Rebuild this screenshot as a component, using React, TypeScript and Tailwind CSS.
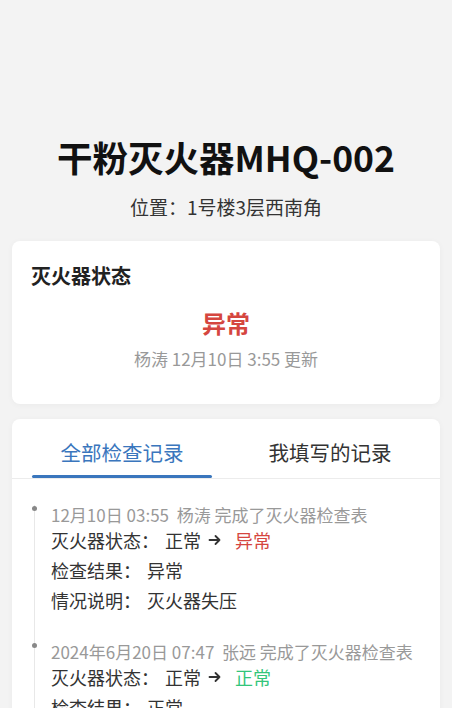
const font = { fontFamily: '"Noto Sans CJK SC", "Noto Sans", sans-serif' };

interface Row {
  label: string;
  value: string;
  from?: string;
  tone?: 'red' | 'green';
}

interface Entry {
  head: string;
  rows: Row[];
}

const entries: Entry[] = [
  {
    head: '12月10日 03:55\u00a0\u00a0杨涛 完成了灭火器检查表',
    rows: [
      { label: '灭火器状态：', from: '正常', value: '异常', tone: 'red' },
      { label: '检查结果：', value: '异常' },
      { label: '情况说明：', value: '灭火器失压' },
    ],
  },
  {
    head: '2024年6月20日 07:47\u00a0\u00a0张远 完成了灭火器检查表',
    rows: [
      { label: '灭火器状态：', from: '正常', value: '正常', tone: 'green' },
      { label: '检查结果：', value: '正常' },
    ],
  },
];

function RecordRow({ row }: { row: Row }) {
  const toneClass =
    row.tone === 'red' ? 'text-[#d5463f]' : row.tone === 'green' ? 'text-[#33c57a]' : 'text-[#333]';
  return (
    <div className="flex items-center text-[18px] leading-[30px] text-[#333]">
      <span>{row.label}</span>
      <span className="ml-[6px]">{row.from ?? ''}</span>
      {row.from && (
        <svg width="14" height="14" viewBox="0 0 14 14" className="mx-[7px]">
          <path d="M1.5 7h10M7.5 3l4 4-4 4" fill="none" stroke="#333" strokeWidth="1.8" strokeLinecap="round" strokeLinejoin="round" />
        </svg>
      )}
      <span className={`${row.from ? 'ml-[6px]' : ''} ${toneClass}`}>{row.value}</span>
    </div>
  );
}

export default function App() {
  return (
    <div className="h-[708px] overflow-hidden bg-[#f3f3f3] px-3 pt-[135px]" style={font}>
      <h1 className="text-center text-[35.5px] leading-[44px] font-bold text-[#111]">干粉灭火器MHQ-002</h1>
      <p className="mt-[14px] text-center text-[19px] leading-[28px] text-[#333]">位置：1号楼3层西南角</p>

      <div className="mt-[20px] rounded-lg bg-white pt-[21px] pb-[33px] shadow-[0_1px_6px_rgba(0,0,0,0.04)]">
        <h2 className="px-[19px] text-[20px] leading-[28px] font-bold text-[#222]">灭火器状态</h2>
        <div className="mt-[17px] text-center text-[24px] leading-[32px] font-bold text-[#d5463f]">异常</div>
        <div className="mt-[8px] text-center text-[17px] leading-[24px] text-[#999]">杨涛 12月10日 3:55 更新</div>
      </div>

      <div className="mt-[15px] overflow-hidden rounded-t-lg bg-white shadow-[0_1px_6px_rgba(0,0,0,0.04)]">
        <div className="flex border-b border-[#ececec] px-[6px]">
          <div className="flex flex-1 flex-col items-center pt-[19px]">
            <span className="text-[20.5px] leading-[28px] text-[#3a76bd]">全部检查记录</span>
            <span className="mt-[9px] h-[3px] w-[180px] rounded-full bg-[#3a76bd]" />
          </div>
          <div className="flex flex-1 flex-col items-center pt-[19px]">
            <span className="text-[20.5px] leading-[28px] text-[#333]">我填写的记录</span>
            <span className="mt-[9px] h-[3px] w-[180px]" />
          </div>
        </div>

        <div className="pt-[26px] pl-[22px]">
          <div className="border-l border-[#e8e8e8]">
            {entries.map((e, i) => (
              <div key={i} className="relative pb-[27px] pl-[16px]">
                <span className="absolute top-[1px] left-[-3px] h-[5px] w-[5px] rounded-full bg-[#888]" />
                <div className="text-[17px] leading-[20px] text-[#999]">{e.head}</div>
                {e.rows.map((r, j) => (
                  <RecordRow key={j} row={r} />
                ))}
              </div>
            ))}
          </div>
        </div>
      </div>
    </div>
  );
}
